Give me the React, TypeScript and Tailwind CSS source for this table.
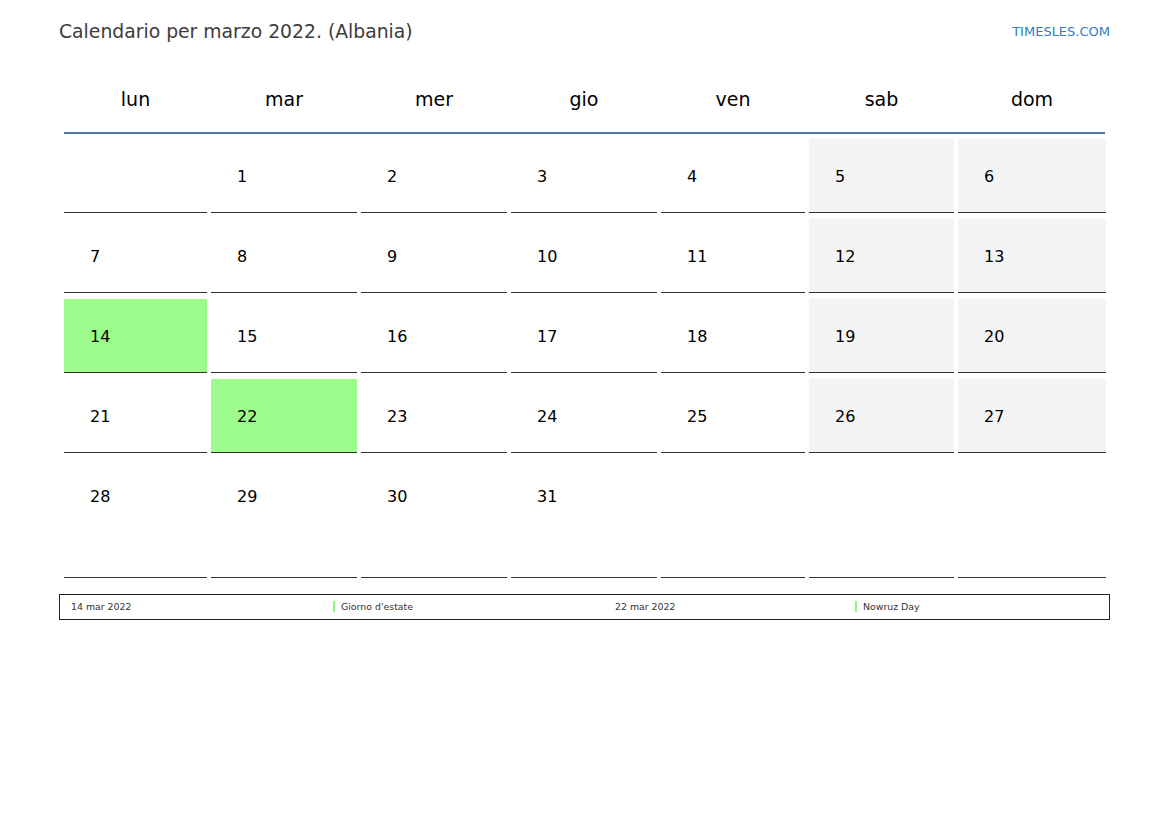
import React from "react";

const days = ["lun", "mar", "mer", "gio", "ven", "sab", "dom"];
const weeks: (number | null)[][] = [
  [null, 1, 2, 3, 4, 5, 6],
  [7, 8, 9, 10, 11, 12, 13],
  [14, 15, 16, 17, 18, 19, 20],
  [21, 22, 23, 24, 25, 26, 27],
  [28, 29, 30, 31, null, null, null],
];
const holidays = [14, 22];

export default function App() {
  return (
    <div
      className="w-[1169px] h-[827px] bg-white text-black"
      style={{ fontFamily: '"DejaVu Sans", "Noto Sans", sans-serif' }}
    >
      <div className="pl-[59px] w-[1110px]">
        <div className="flex items-start justify-between pt-[20px] h-[64px]">
          <div className="text-[18.8px] leading-[24px] text-[#3d3d3d]">
            Calendario per marzo 2022. (Albania)
          </div>
          <div className="text-[13px] leading-[18px] mt-[3px] text-[#2f7bc5]">
            TIMESLES.COM
          </div>
        </div>
        <div className="ml-[5px] w-[1042px]">
          <div className="grid grid-cols-[143px_146px_146px_146px_144px_145px_148px] gap-x-[4px] border-b-2 border-[#5576a3] h-[70px] w-[1041px]">
            {days.map((d) => (
              <div key={d} className="flex items-center justify-center text-[19px] pt-[2px]">
                {d}
              </div>
            ))}
          </div>
          <div className="mt-[5px] flex flex-col gap-y-[6px]">
            {weeks.map((w, wi) => (
              <div
                key={wi}
                className="grid grid-cols-[143px_146px_146px_146px_144px_145px_148px] gap-x-[4px]"
              >
                {w.map((n, di) => {
                  const weekend = di >= 5 && wi < 4;
                  const hol = n !== null && holidays.includes(n);
                  const bg = hol ? "bg-[#9bfb8b]" : weekend ? "bg-[#f4f4f4]" : "bg-white";
                  return (
                    <div
                      key={di}
                      className={`${bg} border-b border-[#333333] flex pl-[26px] text-[16px] ${
                        wi === 4 ? "h-[119px] items-start pt-[26px]" : "h-[74px] items-center pt-[2px]"
                      }`}
                    >
                      {n ?? ""}
                    </div>
                  );
                })}
              </div>
            ))}
          </div>
        </div>
        <div className="mt-[16px] w-[1051px] h-[26px] border border-[#222] flex items-center text-[9.4px] text-[#333] pl-[11px]">
          <div className="w-[262px]">14 mar 2022</div>
          <div className="w-[282px] flex items-center">
            <span className="inline-block w-[2px] h-[11px] bg-[#8ff77e] mr-[6px]" />
            Giorno d'estate
          </div>
          <div className="w-[240px]">22 mar 2022</div>
          <div className="flex items-center">
            <span className="inline-block w-[2px] h-[11px] bg-[#8ff77e] mr-[6px]" />
            Nowruz Day
          </div>
        </div>
      </div>
    </div>
  );
}
